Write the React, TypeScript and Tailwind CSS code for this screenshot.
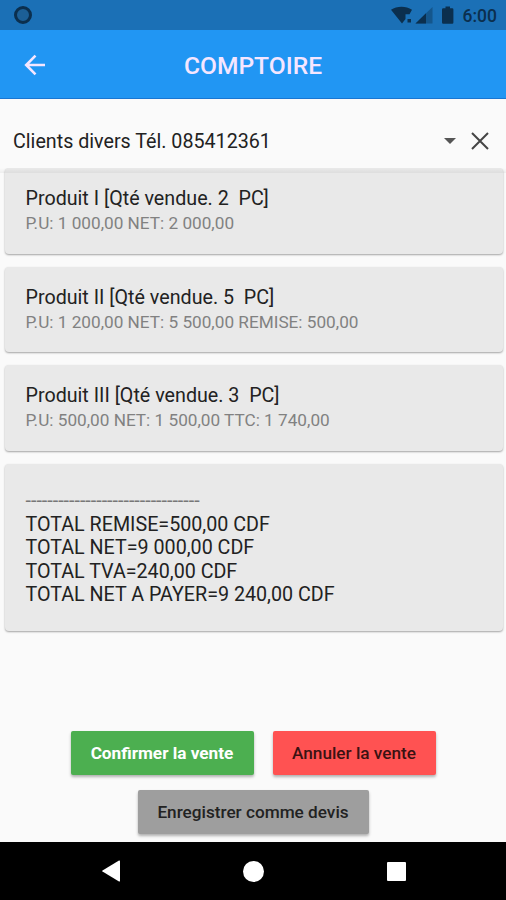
const products = [
  {
    title: 'Produit I [Qté vendue. 2  PC]',
    detail: 'P.U: 1 000,00 NET: 2 000,00',
  },
  {
    title: 'Produit II [Qté vendue. 5  PC]',
    detail: 'P.U: 1 200,00 NET: 5 500,00 REMISE: 500,00',
  },
  {
    title: 'Produit III [Qté vendue. 3  PC]',
    detail: 'P.U: 500,00 NET: 1 500,00 TTC: 1 740,00',
  },
];

const totals = [
  'TOTAL REMISE=500,00 CDF',
  'TOTAL NET=9 000,00 CDF',
  'TOTAL TVA=240,00 CDF',
  'TOTAL NET A PAYER=9 240,00 CDF',
];

const cardClass = 'ml-[5px] mr-[3px] shrink-0 rounded-[4px] bg-[#e9e9e9] pl-[20.500px] shadow-[0_1px_2px_rgba(0,0,0,0.35)]';

function StatusBar() {
  return (
    <div className="flex h-[30px] shrink-0 items-center justify-between bg-[#1b70b6] pl-[14px] pr-[9px] text-[#0b2f4e]">
      <div className="h-[18px] w-[18px] rounded-full border-[3px] border-[#0b2f4e] bg-[#1c5f96]" />
      <div className="flex items-center">
        <svg width="66" height="20" viewBox="0 0 66 20" fill="currentColor">
          {/* wifi */}
          <path d="M0 4.8C6 .8 15 .8 21 4.8L18.500 9.200H14.500V14L11 18.500Z" />
          <rect x="16.500" y="14" width="3.500" height="3.500" />
          {/* signal */}
          <path d="M24.500 18.500L41.500 2V18.500Z" opacity="0.4" />
          <path d="M24.500 18.500L35 8.300V18.500Z" />
          {/* battery */}
          <path d="M54.500 1.500h4.500v1.800h2.200a1.200 1.200 0 0 1 1.200 1.200v13a1.200 1.200 0 0 1-1.200 1.200h-9a1.200 1.200 0 0 1-1.200-1.200V4.500a1.200 1.200 0 0 1 1.200-1.200h2.300z" />
        </svg>
        <span className="ml-[6px] mt-[2px] text-[17.500px] font-medium">6:00</span>
      </div>
    </div>
  );
}

function AppBar() {
  return (
    <header className="grid h-[69px] shrink-0 grid-cols-[70px_1fr_70px] items-center border-b border-[#1976d2] bg-[#2196f3] text-[#f5e6ff]">
      <svg className="ml-[23px] mt-px" width="24" height="24" viewBox="0 0 24 24" fill="none" stroke="currentColor" strokeWidth="2.600">
        <path d="M22 12H4M12.500 2.700L3.200 12l9.300 9.300" />
      </svg>
      <h1 className="pt-[4px] text-center text-[24.600px] font-medium">COMPTOIRE</h1>
    </header>
  );
}

function NavBar() {
  return (
    <nav className="grid h-[58px] shrink-0 grid-cols-[182px_142px_182px] items-center justify-items-center bg-black">
      <svg className="ml-[40px]" width="20" height="22" viewBox="0 0 20 22" fill="white">
        <path d="M18 .5q1-.3 1 .8v19.400q0 1.100-1 .8L1.500 11.600q-.8-.6 0-1.200z" />
      </svg>
      <div className="h-[21px] w-[21px] rounded-full bg-white" />
      <div className="mr-[37px] h-[19px] w-[19px] rounded-[1px] bg-white" />
    </nav>
  );
}

export default function App() {
  return (
    <div className="flex h-[900px] w-[506px] flex-col overflow-hidden bg-[#fafafa] font-['Roboto',sans-serif]">
      <StatusBar />
      <AppBar />

      <div className="flex h-[69px] shrink-0 items-center pl-[13px] pr-[17px] pt-[15px]">
        <span className="flex-1 pt-px text-[19.700px] text-[#222]">Clients divers Tél. 085412361</span>
        <svg className="mr-[15px]" width="12" height="6" viewBox="0 0 12 6" fill="#555">
          <path d="M0 0h12L6 6z" />
        </svg>
        <svg width="18" height="18" viewBox="0 0 18 18" stroke="#444" strokeWidth="2">
          <path d="M1 1l16 16M17 1L1 17" />
        </svg>
      </div>

      <main className="relative flex flex-1 flex-col gap-[13px] overflow-hidden">
        {/* soft shade under the client row */}
        <div className="absolute inset-x-0 top-0 h-[5px] bg-linear-to-b from-transparent to-black/5" />
        {products.map((product) => (
          <div key={product.title} className={`${cardClass} h-[85.500px] pt-[19px]`}>
            <p className="whitespace-pre text-[19.700px] leading-[24px] text-[#222]">{product.title}</p>
            <p className="pt-px text-[17.200px] leading-[22px] text-[#818181]">{product.detail}</p>
          </div>
        ))}
        <div className={`${cardClass} h-[167px] pt-[25.500px] text-[19.700px] leading-[23.500px] text-[#222]`}>
          <p className="text-[#777]">--------------------------------</p>
          {totals.map((line) => (
            <p key={line}>{line}</p>
          ))}
        </div>
      </main>

      <div className="flex h-[111px] shrink-0 flex-col items-center gap-[15px] text-[17.200px] font-medium text-[#222]">
        <div className="flex gap-[19px]">
          <button className="h-[44px] w-[183px] rounded-[2px] bg-[#4caf50] pt-[2px] font-bold text-white shadow-[0_2px_3px_rgba(0,0,0,0.3)]">
            Confirmer la vente
          </button>
          <button className="h-[44px] w-[163px] rounded-[2px] bg-[#ff5252] pt-[2px] text-[#3a1212] shadow-[0_2px_3px_rgba(0,0,0,0.3)]">
            Annuler la vente
          </button>
        </div>
        <button className="h-[44px] w-[231px] rounded-[2px] bg-[#9e9e9e] pt-[2px] shadow-[0_2px_3px_rgba(0,0,0,0.3)]">
          Enregistrer comme devis
        </button>
      </div>
      <NavBar />
    </div>
  );
}
